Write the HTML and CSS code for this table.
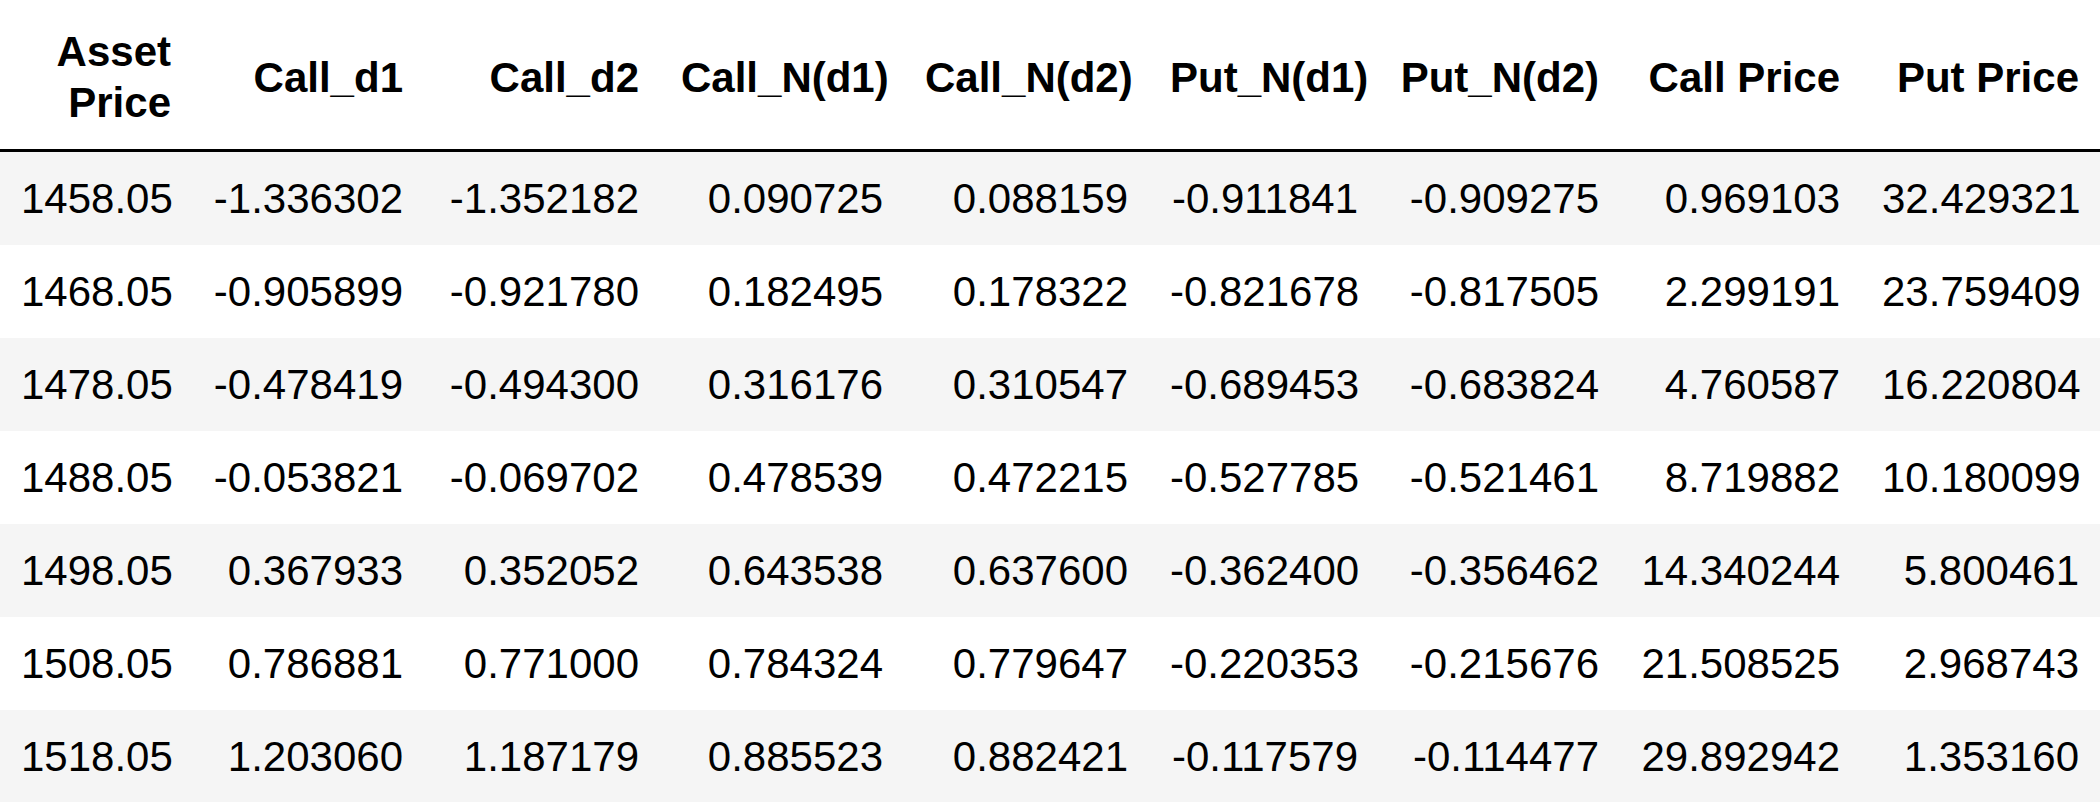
FILE: index.html
```html
<!DOCTYPE html>
<html lang="en">
<head>
<meta charset="utf-8">
<title>Black-Scholes table</title>
<link rel="stylesheet" href="styles.css">
</head>
<body>
<table class="dataframe">
  <colgroup>
    <col class="w-asset">
    <col class="w-cd1">
    <col class="w-cd2">
    <col class="w-cnd1">
    <col class="w-cnd2">
    <col class="w-pnd1">
    <col class="w-pnd2">
    <col class="w-cp">
    <col class="w-pp">
  </colgroup>
  <thead>
    <tr>
      <th>Asset Price</th>
      <th>Call_d1</th>
      <th>Call_d2</th>
      <th>Call_N(d1)</th>
      <th>Call_N(d2)</th>
      <th>Put_N(d1)</th>
      <th>Put_N(d2)</th>
      <th>Call Price</th>
      <th>Put Price</th>
    </tr>
  </thead>
  <tbody>
    <tr>
      <td>1458.05</td><td>-1.336302</td><td>-1.352182</td><td>0.090725</td><td>0.088159</td><td>-0.911841</td><td>-0.909275</td><td>0.969103</td><td>32.429321</td>
    </tr>
    <tr>
      <td>1468.05</td><td>-0.905899</td><td>-0.921780</td><td>0.182495</td><td>0.178322</td><td>-0.821678</td><td>-0.817505</td><td>2.299191</td><td>23.759409</td>
    </tr>
    <tr>
      <td>1478.05</td><td>-0.478419</td><td>-0.494300</td><td>0.316176</td><td>0.310547</td><td>-0.689453</td><td>-0.683824</td><td>4.760587</td><td>16.220804</td>
    </tr>
    <tr>
      <td>1488.05</td><td>-0.053821</td><td>-0.069702</td><td>0.478539</td><td>0.472215</td><td>-0.527785</td><td>-0.521461</td><td>8.719882</td><td>10.180099</td>
    </tr>
    <tr>
      <td>1498.05</td><td>0.367933</td><td>0.352052</td><td>0.643538</td><td>0.637600</td><td>-0.362400</td><td>-0.356462</td><td>14.340244</td><td>5.800461</td>
    </tr>
    <tr>
      <td>1508.05</td><td>0.786881</td><td>0.771000</td><td>0.784324</td><td>0.779647</td><td>-0.220353</td><td>-0.215676</td><td>21.508525</td><td>2.968743</td>
    </tr>
    <tr>
      <td>1518.05</td><td>1.203060</td><td>1.187179</td><td>0.885523</td><td>0.882421</td><td>-0.117579</td><td>-0.114477</td><td>29.892942</td><td>1.353160</td>
    </tr>
  </tbody>
</table>
</body>
</html>
```

FILE: styles.css
```css
html, body {
  margin: 0;
  padding: 0;
  background: #ffffff;
  overflow: hidden;
}

body {
  font-family: "Liberation Sans", Arial, Helvetica, sans-serif;
  color: #000000;
}

.dataframe {
  width: 2100px;
  table-layout: fixed;
  border-collapse: separate;
  border-spacing: 0;
  font-size: 42px;
  line-height: 51px;
}

.w-asset { width: 192px; }
.w-cd1   { width: 232px; }
.w-cd2   { width: 236px; }
.w-cnd1  { width: 244px; }
.w-cnd2  { width: 245px; }
.w-pnd1  { width: 230px; }
.w-pnd2  { width: 241px; }
.w-cp    { width: 241px; }
.w-pp    { width: 239px; }

.dataframe th {
  font-weight: bold;
  text-align: right;
  vertical-align: middle;
  padding: 26px 21px 21px 21px;
  border-bottom: 3px solid #000000;
  background: #ffffff;
}

.dataframe td {
  text-align: right;
  vertical-align: middle;
  padding: 21px;
  white-space: nowrap;
}

.dataframe tbody tr:nth-child(odd) {
  background: #f5f5f5;
}
```
